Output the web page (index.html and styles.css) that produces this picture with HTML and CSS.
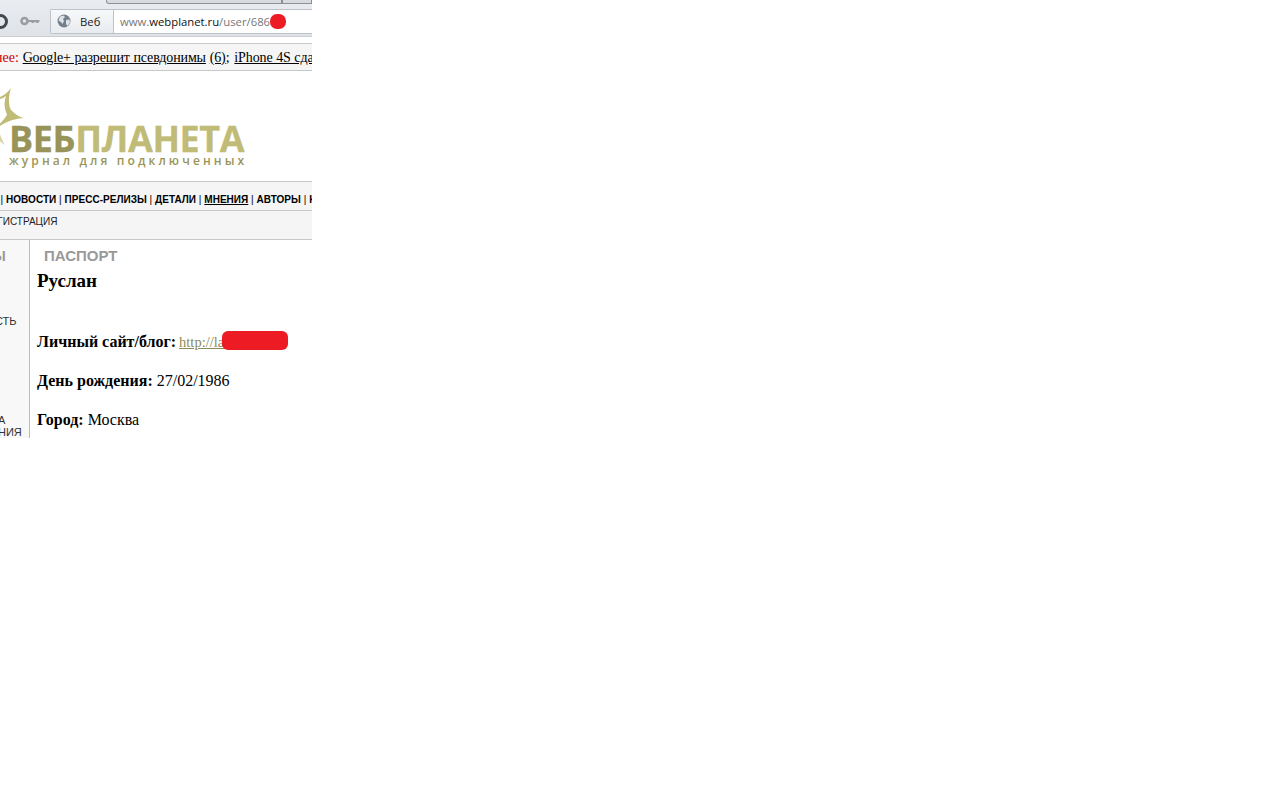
FILE: index.html
```html
<!DOCTYPE html>
<html lang="ru">
<head>
    <meta charset="UTF-8">
    <title>Веб-планета</title>
    <link rel="stylesheet" href="styles.css">
</head>
<body>
    <div class="shot">
        <div class="toolbar">
            <div class="tabs">
                <div class="tab tab-one"></div>
                <div class="tab tab-two"></div>
            </div>
            <div class="address-row">
                <div class="back-ring"></div>
                <svg class="key" width="20" height="10" viewBox="0 0 20 10">
                    <circle cx="4.500" cy="5" r="3" fill="none" stroke="#9a9ea3" stroke-width="2.600"/>
                    <path d="M8 4h11.500v1.500L18 7h-1.500L15.500 6h-1l-1 1H12L11 6H8z" fill="#9a9ea3"/>
                </svg>
                <div class="address">
                    <div class="engine">
                        <svg class="globe" width="14" height="14" viewBox="0 0 14 14">
                            <circle cx="7" cy="7" r="6.500" fill="#74808c"/>
                            <path d="M3 2.500 6.500 1.500 8 3 6 5 7 7 5.500 10 4 8 1.500 6.500zM9 6l3.500-.5.500 3-2.500 3.500L9 10z" fill="#dfe3e7"/>
                        </svg>
                        <span>Веб</span>
                    </div>
                    <div class="url">www.<b>webplanet.ru</b>/user/686<i class="blot-dot"></i></div>
                </div>
            </div>
        </div>
        <div class="ticker">
            <div class="ticker-text"><span class="label">нее:</span> <a href="#">Google+ разрешит псевдонимы</a> <a href="#" class="plain">(6)</a>; <a href="#" class="next">iPhone 4S сдал</a></div>
        </div>
        <div class="masthead">
            <svg class="star" width="26" height="60" viewBox="0 0 26 60">
                <path d="M11 0C8.500 8 8 16 11 22 15 26 19 29 24 30 16 30.500 7 33 0 38V35.500C3 32.500 6 29 7 26.500 4 20 4 14 6 8 4 9.500 2 10.500 0 11V9C4 7.500 8 4 11 0Z" fill="#c0bb76"/>
                <path d="M0 46C1 50 3 54 5 57 3 56 1 54 0 53Z" fill="#d6d3a4"/>
            </svg>
            <div class="logo">
                <div class="logo-name"><span class="dark">ВЕБ</span>ПЛАНЕТА</div>
                <div class="logo-sub">журнал для подключенных</div>
            </div>
        </div>
        <div class="nav">
            <div class="nav-text"><a href="#">НОВОСТИ</a> | <a href="#">ПРЕСС-РЕЛИЗЫ</a> | <a href="#">ДЕТАЛИ</a> | <a href="#" class="current">МНЕНИЯ</a> | <a href="#">АВТОРЫ</a> | <a href="#">КОНКУРСЫ</a></div>
        </div>
        <div class="subnav">
            <div class="subnav-text">РЕГИСТРАЦИЯ</div>
        </div>
        <div class="content">
            <aside class="side">
                <div class="side-title">Ы</div>
                <div class="side-one">СТЬ</div>
                <div class="side-two">А<br>НИЯ</div>
            </aside>
            <main class="main">
                <h2 class="section">ПАСПОРТ</h2>
                <h1 class="name">Руслан</h1>
                <p class="field site"><b>Личный сайт/блог:</b> <a href="#" class="site-link">http://la</a><i class="blot-bar"></i></p>
                <p class="field"><b>День рождения:</b> 27/02/1986</p>
                <p class="field"><b>Город:</b> Москва</p>
            </main>
        </div>
    </div>
</body>
</html>
```

FILE: styles.css
```css
/* General Styling */
body {
    margin: 0;
    padding: 0;
    background-color: #fff;
    color: #000;
    font-family: "Liberation Serif", serif;
}

.shot {
    width: 312px;
    height: 438px;
    overflow: hidden;
}

/* Browser toolbar */
.toolbar {
    height: 36px;
    margin-bottom: 6px;
    border-bottom: 1px solid #c9ccd0;
    background: linear-gradient(#e9edf1, #dfe3e7);
}

.tabs {
    display: flex;
    height: 4px;
    margin-left: 106px;
}

.tab {
    height: 3px;
    border: 1px solid #8d9094;
    border-top: none;
    background: #d8dbdf;
}

.tab-one {
    width: 174px;
    border-radius: 0 0 0 3px;
}

.tab-two {
    flex: 1;
}

.address-row {
    display: flex;
    align-items: center;
    height: 32px;
    padding-top: 2px;
    box-sizing: border-box;
}

.back-ring {
    width: 9px;
    height: 9px;
    margin-left: -7px;
    border: 3px solid #42484f;
    border-radius: 50%;
}

.key {
    margin-left: 12px;
}

.address {
    display: flex;
    flex: 1;
    height: 23px;
    margin-left: 10px;
    border: 1px solid #bcc2c8;
    border-right: none;
    border-radius: 2px 0 0 2px;
    background: #fff;
    font-family: "Open Sans", sans-serif;
    font-size: 11.300px;
}

.engine {
    display: flex;
    align-items: center;
    gap: 9px;
    width: 63px;
    padding-left: 6px;
    box-sizing: border-box;
    border-right: 1px solid #bcc2c8;
    background: linear-gradient(#f7f8fa, #e8ebef);
    color: #222;
}

.url {
    display: flex;
    align-items: center;
    padding-left: 6px;
    color: #777;
    white-space: pre;
}

.url b {
    color: #111;
    font-weight: 400;
}

.blot-dot {
    width: 16px;
    height: 15px;
    border-radius: 7px;
    background: #ed1c24;
}

/* Ticker */
.ticker {
    height: 26px;
    border-top: 1px solid #c8c8c8;
    border-bottom: 1px solid #c8c8c8;
    background: #f5f5f5;
    font-size: 14px;
    line-height: 28px;
    white-space: nowrap;
    overflow: hidden;
}

.ticker-text {
    margin-left: -5px;
    word-spacing: 0.300px;
}

.ticker .label {
    color: #c00;
}

.ticker a {
    color: #000;
    letter-spacing: -0.130px;
}

.ticker a.next {
    margin-left: 1px;
}

/* Logo */
.masthead {
    display: flex;
    height: 110px;
}

.star {
    flex: none;
    margin: 17px -16px 0 0;
}

.logo {
    padding-top: 50px;
}

.logo-name {
    margin-left: -1px;
    font-family: "Open Sans", sans-serif;
    font-size: 36px;
    font-weight: 700;
    line-height: 36px;
    letter-spacing: -0.400px;
    color: #c0bb76;
    -webkit-text-stroke: 0.3px;
}

.logo-name .dark {
    color: #989358;
}

.logo-sub {
    margin: -3px 0 0 -1px;
    font-family: "Open Sans", sans-serif;
    font-size: 12px;
    font-weight: 600;
    line-height: 14px;
    letter-spacing: 3.120px;
    color: #9a9558;
}

/* Navigation */
.nav,
.subnav {
    border-top: 1px solid #c8c8c8;
    background: #f5f5f5;
    font-family: "Liberation Sans", sans-serif;
    white-space: nowrap;
    overflow: hidden;
}

.nav {
    height: 28px;
    font-size: 10px;
    line-height: 35px;
    letter-spacing: 0.030px;
}

.nav-text {
    padding-left: 0.600px;
}

.nav-text::before {
    content: "| ";
}

.nav a {
    color: #000;
    font-weight: 700;
    text-decoration: none;
}

.nav a.current {
    text-decoration: underline;
}

.subnav {
    height: 28px;
    border-bottom: 1px solid #c8c8c8;
    font-size: 10px;
    line-height: 21px;
    color: #222;
}

.subnav-text {
    margin-left: -16px;
}

/* Content */
.content {
    display: flex;
    height: 198px;
}

.side {
    flex: none;
    width: 29px;
    border-right: 1px solid #bcbcbc;
    background: #f8f8f8;
    font-family: "Liberation Sans", sans-serif;
    font-size: 11px;
    color: #333;
    overflow: hidden;
}

.side-title {
    margin: 8px 0 0 -8px;
    font-size: 14px;
    font-weight: 700;
    line-height: 16px;
    color: #999;
}

.side-one {
    margin: 50px 0 0 -5px;
    line-height: 14px;
}

.side-two {
    margin: 86px 0 0 -2px;
    line-height: 12px;
}

.main {
    flex: 1;
    padding-left: 7px;
    font-size: 16px;
    white-space: nowrap;
}

.section {
    margin: 8px 0 0 7px;
    font-family: "Liberation Sans", sans-serif;
    font-size: 15px;
    line-height: 16px;
    color: #999;
}

.name {
    margin: 5px 0 0;
    font-size: 19px;
    line-height: 24px;
}

.field {
    margin: 0;
    height: 39px;
    line-height: 18px;
}

.site {
    height: 41px;
    margin-top: 38px;
}

.site-link {
    margin-left: -1px;
    color: #8c8a55;
    font-size: 14.500px;
}

.blot-bar {
    display: inline-block;
    width: 66px;
    height: 19px;
    margin-left: -2px;
    border-radius: 6px;
    background: #ed1c24;
    vertical-align: -3px;
}
```
